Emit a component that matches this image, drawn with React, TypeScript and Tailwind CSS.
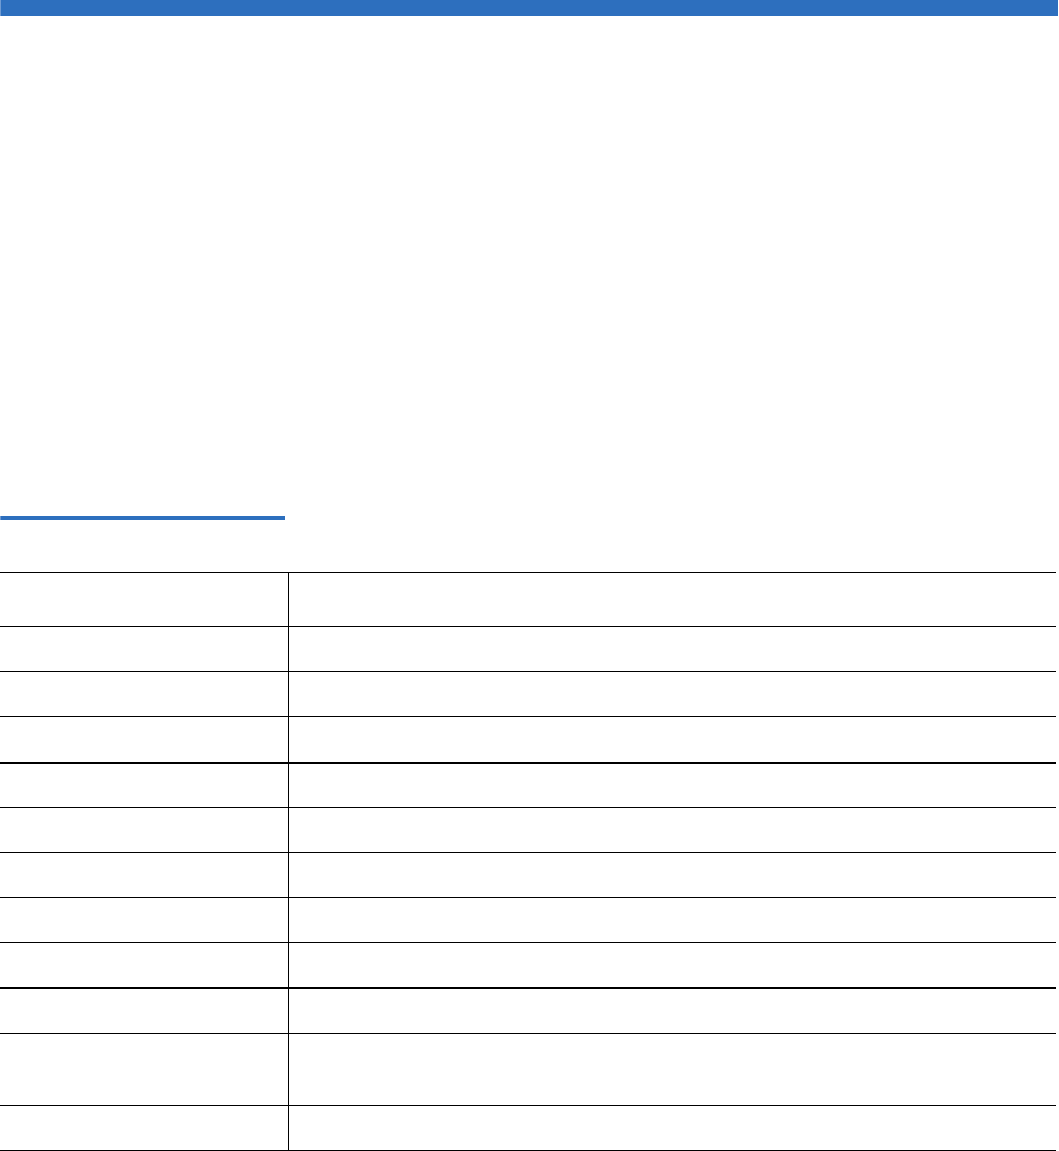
import React from "react";

interface Row {
  height: string;
  thick?: boolean;
  last?: boolean;
}

// row heights measured from the reference, top border included
const rows: Row[] = [
  { height: "h-[54px]" },
  { height: "h-[45px]" },
  { height: "h-[45px]" },
  { height: "h-[46px]" },
  { height: "h-[45px]", thick: true },
  { height: "h-[45px]" },
  { height: "h-[45px]" },
  { height: "h-[45px]" },
  { height: "h-[45px]" },
  { height: "h-[46px]", thick: true },
  { height: "h-[72px]" },
  { height: "h-[46px]", last: true },
];

function TableRow({ row }: { row: Row }) {
  return (
    <div
      className={
        "grid grid-cols-[289px_1fr] border-black " +
        (row.thick ? "border-t-2 " : "border-t ") +
        (row.last ? "border-b " : "") +
        row.height
      }
    >
      <div className="border-r border-black" />
      <div />
    </div>
  );
}

export default function App() {
  return (
    <div className="w-[1059px] min-h-[1151px] bg-white font-['Liberation_Sans',sans-serif]">
      {/* header bar */}
      <div className="h-[16px] w-[1058px] border-l border-[#6f9bd3] bg-[#2d6fbe]" />

      {/* section rule */}
      <div className="pt-[500px]">
        <div className="h-[4px] w-[285px] border-l border-[#6f9bd3] bg-[#2d6fbe]" />
      </div>

      {/* table */}
      <div className="mt-[52px] w-[1056px]">
        {rows.map((row, i) => (
          <TableRow key={i} row={row} />
        ))}
      </div>
    </div>
  );
}
